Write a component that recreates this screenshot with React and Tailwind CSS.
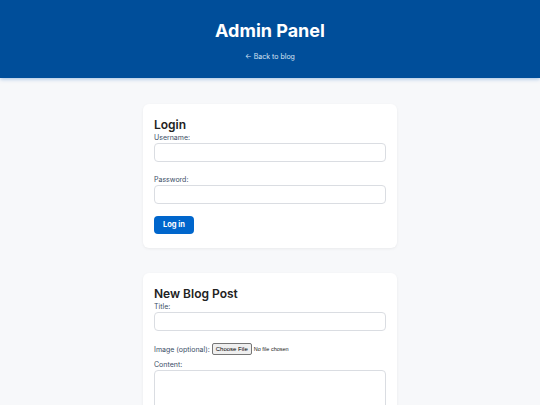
import React from "react";

const Label = ({ children, htmlFor }) => (
  <label htmlFor={htmlFor} className="block text-[7px] leading-[9px] text-[#3a4d66] mb-[1px]">
    {children}
  </label>
);

const TextInput = ({ id, type = "text" }) => (
  <input
    id={id}
    type={type}
    className="block w-full h-[19px] rounded-[4px] border border-[#dadde2] bg-white px-2 text-[8px] outline-none"
  />
);

const App = () => {
  return (
    <div className="min-h-screen bg-[#f7f8fa] font-['Inter',sans-serif]">
      <header className="flex flex-col items-center h-[78px] bg-[#004e9a] pt-[20px] shadow-[0_1px_4px_rgba(0,90,180,0.35)]">
        <h1 className="text-[18px] leading-[22px] font-bold text-white">Admin Panel</h1>
        <a href="#" className="mt-[10px] text-[7px] leading-[10px] text-[#d6e4f5]">
          ← Back to blog
        </a>
      </header>

      <main className="flex flex-col items-center pt-[26px] gap-[25px]">
        <section className="w-[254px] bg-white rounded-[6px] shadow-[0_1px_3px_rgba(0,0,0,0.06)] px-[11px] pt-[13px] pb-[14px]">
          <h2 className="text-[12px] leading-[15px] font-semibold text-[#222]">Login</h2>
          <div className="mt-[1px]">
            <Label htmlFor="username">Username:</Label>
            <TextInput id="username" />
          </div>
          <div className="mt-[13px]">
            <Label htmlFor="password">Password:</Label>
            <TextInput id="password" type="password" />
          </div>
          <button className="mt-[12px] w-[40px] h-[18px] rounded-[4px] bg-[#0066cc] text-white text-[7.5px] font-bold">
            Log in
          </button>
        </section>

        <section className="w-[254px] bg-white rounded-[6px] shadow-[0_1px_3px_rgba(0,0,0,0.06)] px-[11px] pt-[13px] pb-[14px]">
          <h2 className="text-[12px] leading-[15px] font-semibold text-[#222]">New Blog Post</h2>
          <div className="mt-[1px]">
            <Label htmlFor="title">Title:</Label>
            <TextInput id="title" />
          </div>
          <div className="mt-[12px] flex items-center gap-[2px]">
            <span className="text-[7px] leading-[9px] text-[#3a4d66]">Image (optional):</span>
            <input
              type="file"
              className="text-[5.5px] leading-[8px] text-[#222] font-['Liberation_Sans',sans-serif] file:mr-[2px] file:px-[3px] file:py-[1px] file:border file:border-[#767676] file:rounded-[2px] file:bg-[#efefef] file:text-[6px] file:text-black"
            />
          </div>
          <div className="mt-[5px]">
            <Label htmlFor="content">Content:</Label>
            <textarea
              id="content"
              className="block w-full h-[80px] rounded-[4px] border border-[#dadde2] bg-white resize-none outline-none"
            />
          </div>
        </section>
      </main>
    </div>
  );
};

export default App;
